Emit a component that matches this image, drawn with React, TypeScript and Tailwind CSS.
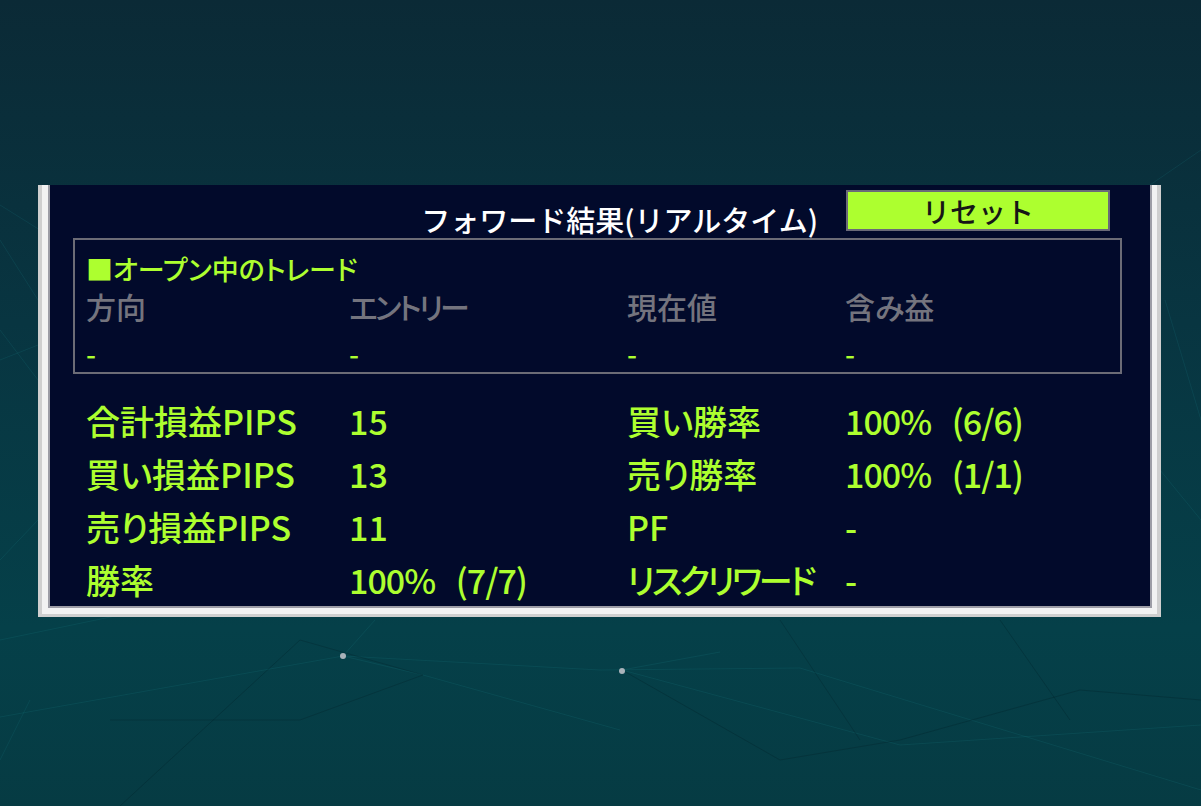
const jp = "font-['Noto_Sans_CJK_JP',sans-serif]";
const palt = "[font-feature-settings:'palt']";

type Cell = { t: string; tail?: string; tight?: boolean };

const stats: Cell[][] = [
  [{ t: "合計損益PIPS" }, { t: "15" }, { t: "買い勝率" }, { t: "100%", tail: "(6/6)" }],
  [{ t: "買い損益PIPS" }, { t: "13" }, { t: "売り勝率" }, { t: "100%", tail: "(1/1)" }],
  [{ t: "売り損益PIPS" }, { t: "11" }, { t: "PF" }, { t: "-" }],
  [{ t: "勝率" }, { t: "100%", tail: "(7/7)" }, { t: "リスクリワード", tight: true }, { t: "-" }],
];

function StatCell({ c }: { c: Cell }) {
  return (
    <span className={c.tight ? "tracking-[-3px]" : ""}>
      {c.tail ? (
        <>
          <span className="tracking-[-1px]">{c.t} </span>
          <span className="ml-[14px] tracking-[-1px]">{c.tail}</span>
        </>
      ) : (
        c.t
      )}
    </span>
  );
}

function Backdrop() {
  // faint mesh lines + dots behind the panel
  return (
    <svg className="absolute inset-0 h-full w-full" viewBox="0 0 1201 806" preserveAspectRatio="none">
      <g stroke="#1f8a8f" strokeOpacity="0.16" strokeWidth="1" fill="none">
        <path d="M0 205 L40 230 M0 240 L38 300 M0 330 L38 380 M0 360 L38 345" />
        <path d="M0 717 L343 656 L600 670 L800 668 L1201 790" />
        <path d="M343 656 L375 620 M343 656 L423 675 L620 730" />
        <path d="M622 670 L720 652 M622 670 L900 745 L1201 725" />
        <path d="M1150 185 L1201 150 M1165 300 L1201 420 M1160 470 L1201 520" />
        <path d="M0 560 L38 520 M0 640 L120 615 M30 700 L0 760" />
      </g>
      <g stroke="#021e24" strokeOpacity="0.28" strokeWidth="1" fill="none">
        <path d="M120 806 L300 640 L423 675 L300 720 L110 720" />
        <path d="M622 670 L780 760 L900 740 L1080 690 L1201 700" />
        <path d="M780 620 L860 740 M1000 620 L1070 720" />
      </g>
      <circle cx="343" cy="656" r="3" fill="#a9b3ba" />
      <circle cx="622" cy="671" r="3" fill="#a9b3ba" />
    </svg>
  );
}

export default function App() {
  return (
    <div className="relative h-[806px] w-full overflow-hidden bg-[linear-gradient(180deg,#0b2a36_0%,#083541_40%,#054049_78%,#063b43_100%)]">
      <Backdrop />
      <div className={`relative ml-[38px] w-[1123px] pt-[185px] ${jp}`}>
        <div className="border-x-[4px] border-b-[3px] border-[#cfcfcf] bg-[#f2f2f2] pl-[6px] pr-[5px] pb-[6px]">
          <div className="border-x-[2px] border-b-[2px] border-[#9d9da6] bg-[#020a2b]">
            {/* header row */}
            <div className="flex h-[53px] items-start justify-end pr-[40px]">
              <div className="mt-[17px] mr-[28px] text-[29px] leading-[34px] font-medium text-white">
                フォワード結果(リアルタイム)
              </div>
              <button className="mt-[5px] h-[41px] w-[264px] border-2 border-[#6a6a78] bg-[#adff2f] text-[28px] leading-[36px] font-medium text-[#161616]">
                リセット
              </button>
            </div>

            {/* open trades box */}
            <div className={`ml-[23px] mr-[28px] border-2 border-[#6c6c76] pt-[13px] pb-[3px] pl-[11px] ${palt}`}>
              <div className="text-[27px] leading-[32px] font-medium text-[#adff2f]">■オープン中のトレード</div>
              <div className="mt-[5px] grid grid-cols-[263px_278px_218px_1fr] text-[30px] leading-[32px] font-medium text-[#74747e]">
                <span>方向</span>
                <span className="tracking-[-3px]">エントリー</span>
                <span>現在値</span>
                <span>含み益</span>
              </div>
              <div className="mt-[15px] grid grid-cols-[263px_278px_218px_1fr] text-[28px] leading-[32px] font-medium text-[#adff2f]">
                <span>-</span>
                <span>-</span>
                <span>-</span>
                <span>-</span>
              </div>
            </div>

            {/* totals */}
            <div className={`mt-[20px] pl-[36px] ${palt}`}>
              {stats.map((r) => (
                <div
                  key={r[0].t}
                  className="grid h-[53px] grid-cols-[263px_278px_218px_1fr] text-[34px] leading-[53px] font-medium whitespace-pre text-[#adff2f]"
                >
                  {r.map((c, i) => (
                    <StatCell key={i} c={c} />
                  ))}
                </div>
              ))}
            </div>
          </div>
        </div>
      </div>
    </div>
  );
}
